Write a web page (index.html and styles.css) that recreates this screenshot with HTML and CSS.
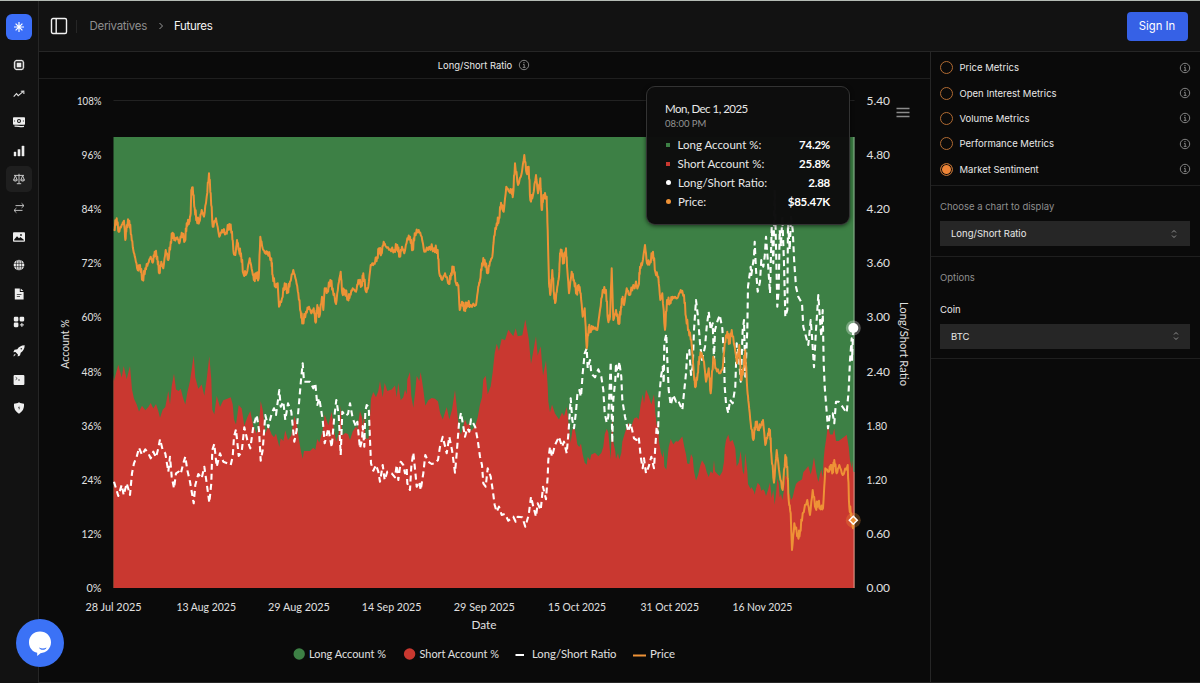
FILE: index.html
```html
<!DOCTYPE html>
<html lang="en">
<head>
  <meta charset="UTF-8" />
  <meta name="viewport" content="width=device-width, initial-scale=1" />
  <title>Futures - Long/Short Ratio</title>
  <link rel="stylesheet" href="styles.css">
</head>
<body>
  <svg width="0" height="0" class="defs">
    <symbol id="i-info" viewBox="0 0 12 12">
      <circle cx="6" cy="6" r="4.7" fill="none" stroke="currentColor" stroke-width=".8"/>
      <path d="M5 5.4h1.2v2.9M4.8 8.4h2.7" fill="none" stroke="currentColor" stroke-width=".8"/>
      <circle cx="6" cy="3.6" r=".6" fill="currentColor"/>
    </symbol>
    <symbol id="i-updown" viewBox="0 0 8 10">
      <path d="M2 3.5 4 1.5l2 2M2 6.5l2 2 2-2" fill="none" stroke="currentColor" stroke-width=".9"/>
    </symbol>
  </svg>

  <div class="app">
    <nav class="sidebar">
      <div class="logo">
        <svg width="12" height="12" viewBox="0 0 12 12"><path d="M6 1v10M1 6h10M2.6 2.6l6.8 6.8M9.4 2.6 2.6 9.4" stroke="#fff" stroke-width="1.2"/></svg>
      </div>
      <a class="nav-item"><svg viewBox="0 0 12 12"><rect x="1.7" y="1.7" width="8.6" height="8.6" rx="1.6" fill="none" stroke="#e8e8e8" stroke-width="1.3"/><rect x="3.7" y="3.7" width="4.6" height="4.6" fill="#e8e8e8"/><path d="M4 .6v1M6 .6v1M8 .6v1M4 10.4v1M6 10.4v1M8 10.4v1M.6 4h1M.6 6h1M.6 8h1M10.4 4h1M10.4 6h1M10.4 8h1" stroke="#e8e8e8" stroke-width=".9"/></svg></a>
      <a class="nav-item"><svg viewBox="0 0 12 12"><path d="M.7 8.7 3.5 5.7l1.7 2L9.8 3.9M7.8 3.2l3-.1.1 3" fill="none" stroke="#e0e0e0" stroke-width="1.1"/></svg></a>
      <a class="nav-item"><svg viewBox="0 0 12 12"><rect x="0" y="1.2" width="12" height="7.6" rx=".8" fill="#eee"/><circle cx="6" cy="5" r="2" fill="#121212"/><circle cx="6" cy="5" r="1" fill="#eee"/><path d="M1.6 4.2v1.6M10.4 4.2v1.6" stroke="#555" stroke-width=".8"/><path d="M1.5 10.2c3-.6 5.5.8 9.5.2" stroke="#eee" stroke-width="1.2" fill="none"/></svg></a>
      <a class="nav-item"><svg viewBox="0 0 12 12"><path d="M1 7h2v4H1zM4.900 4.500h2.200V11H4.900zM8.900 1h2.200v10H8.900z" fill="#eee" stroke="#eee" stroke-width=".4"/></svg></a>
      <a class="nav-item active"><svg viewBox="0 0 12 12"><path d="M6 .8v9.700M1 2.400h10M3.800 10.700h4.400M.6 7 2.400 2.800 4.200 7M7.800 7l1.800-4.200L11.400 7M.5 7c.5 1.500 3.300 1.500 3.800 0zM7.700 7c.5 1.500 3.300 1.500 3.800 0z" fill="none" stroke="#cfcfcf" stroke-width=".95"/></svg></a>
      <a class="nav-item"><svg viewBox="0 0 12 12"><path d="M2.500 3.600h8.300M8.600 1.300 11 3.600 8.600 5.900M9.500 8.400H1.200M3.400 6.100 1 8.400l2.400 2.300" fill="none" stroke="#cfcfcf" stroke-width=".9"/></svg></a>
      <a class="nav-item"><svg viewBox="0 0 12 12"><rect y="1.300" width="12" height="9.400" rx=".9" fill="#eee"/><path d="M1.200 8.500 4 5.200l2 2 1.300-1.100 3.500 2.600v.8H1.200z" fill="#121212"/><circle cx="8" cy="4" r=".9" fill="#121212"/></svg></a>
      <a class="nav-item"><svg viewBox="0 0 12 12"><circle cx="6" cy="6" r="5.300" fill="#eee"/><path d="M.5 4.300h11M.5 7.700h11M6 .5v11M4.200.8c-1.200 3.500-1.200 7 0 10.400M7.800.8c1.200 3.500 1.200 7 0 10.400" fill="none" stroke="#222" stroke-width=".7"/></svg></a>
      <a class="nav-item"><svg viewBox="0 0 12 12"><path d="M1.800.4h5v3.500h3.800v7.700H1.800z" fill="#eee"/><path d="M7.700.6 10.400 3H7.700z" fill="#eee"/><path d="M3.800 6.500h4.700M3.800 8.500H7" stroke="#333" stroke-width=".8"/></svg></a>
      <a class="nav-item"><svg viewBox="0 0 12 12"><rect x=".8" y=".8" width="4.600" height="4.600" rx="1.100" fill="#eee"/><rect x="6.600" y=".8" width="4.600" height="4.600" rx="1.100" fill="#eee"/><rect x=".8" y="6.600" width="4.600" height="4.600" rx="1.100" fill="#eee"/><path d="M8.900 6.900v4M6.900 8.900h4" stroke="#eee" stroke-width="1"/></svg></a>
      <a class="nav-item"><svg viewBox="0 0 12 12"><path d="M11.700.3C8 .3 5.900 2 4.300 4.200L1.500 4.800.3 7.200l2.200-.2 2.400 2.500-.2 2.100 2.300-1.200.7-2.700C10 6.200 11.700 4 11.700.3z" fill="#eee"/><path d="M.5 11.400c0-1.700.7-2.700 1.900-2.700.5.900-.3 2.500-1.900 2.700z" fill="#bbb"/><circle cx="8.300" cy="3.700" r=".8" fill="#333"/></svg></a>
      <a class="nav-item"><svg viewBox="0 0 12 12"><rect x=".6" y=".9" width="10.800" height="10.200" rx="1" fill="#eee"/><path d="M2.600 3.200 4.200 4.500 2.600 5.800M5 6h2" stroke="#333" stroke-width=".8" fill="none"/></svg></a>
      <a class="nav-item"><svg viewBox="0 0 12 12"><path d="M6 .3c1.600 1 3.200 1.400 5 1.500.3 4.700-1.200 7.700-5 9.900C2.200 9.500.7 6.500 1 1.800 2.800 1.700 4.400 1.300 6 .3z" fill="#eee"/><path d="M6.500 3.400 4.900 6.200h1.300l-.5 2.200 1.500-2.900H6z" fill="#333"/></svg></a>
    </nav>

    <div class="page">
      <header class="topbar">
        <svg class="panel-icon" viewBox="0 0 18 18"><rect x="1.500" y="1.500" width="15" height="15" rx="1.500" fill="none" stroke="#f2f2f2" stroke-width="1.400"/><path d="M6.200 1.500v15" stroke="#f2f2f2" stroke-width="1.400"/></svg>
        <span class="divider"></span>
        <span class="crumb">Derivatives</span>
        <svg class="chevron" viewBox="0 0 6 8"><path d="M1.500 1 4.500 4l-3 3" fill="none" stroke="#9a9a9a" stroke-width="1"/></svg>
        <span class="crumb current">Futures</span>
        <button class="sign-in">Sign In</button>
      </header>

      <div class="content">
        <main class="chart-panel">
          <div class="chart-title">Long/Short Ratio <svg class="info"><use href="#i-info"/></svg></div>
          <div class="chart-area">
            <svg id="chart" class="chart" viewBox="39 79 891 603">
              <g id="grid"></g>
              <rect x="113.500" y="137" width="741" height="451" fill="#3d8045"/>
              <path id="short-area" fill="#c93830"/>
              <path d="M854 137v451" stroke="#fff" stroke-opacity=".35" stroke-width="1.200"/>
              <path id="ratio-line" class="line ratio"/>
              <path id="price-line" class="line price"/>
              <circle cx="853.300" cy="328" r="7.500" fill="#fff" fill-opacity=".3"/>
              <circle cx="853.300" cy="328" r="5" fill="#fff"/>
              <circle cx="853.300" cy="520.300" r="7.500" fill="#ee9236" fill-opacity=".3"/>
              <path d="M853.300 516.300l4 4-4 4-4-4z" fill="#ee9236" stroke="#fff" stroke-width="1.500"/>
              <g id="labels"></g>
              <path d="M896.500 108.500h13M896.500 112.500h13M896.500 116.500h13" stroke="#8b8b8b" stroke-width="1.700"/>
              <circle cx="299.200" cy="654" r="5.700" fill="#3d8045"/>
              <circle cx="409.600" cy="654" r="5.700" fill="#c93830"/>
              <path d="M515.500 655h8.500" stroke="#fff" stroke-width="2"/>
              <path d="M633 655.500h13" stroke="#ee9236" stroke-width="2"/>
            </svg>
            <div class="tooltip">
              <div class="tip-date">Mon, Dec 1, 2025</div>
              <div class="tip-time">08:00 PM</div>
              <div class="tip-row"><i class="mark green"></i><span>Long Account %:</span><b>74.2%</b></div>
              <div class="tip-row"><i class="mark red"></i><span>Short Account %:</span><b>25.8%</b></div>
              <div class="tip-row"><i class="mark round white"></i><span>Long/Short Ratio:</span><b>2.88</b></div>
              <div class="tip-row"><i class="mark round orange"></i><span>Price:</span><b>$85.47K</b></div>
            </div>
          </div>
        </main>

        <aside class="options">
          <div class="metrics">
            <label class="metric"><i class="radio"></i>Price Metrics<svg class="info"><use href="#i-info"/></svg></label>
            <label class="metric"><i class="radio"></i>Open Interest Metrics<svg class="info"><use href="#i-info"/></svg></label>
            <label class="metric"><i class="radio"></i>Volume Metrics<svg class="info"><use href="#i-info"/></svg></label>
            <label class="metric"><i class="radio"></i>Performance Metrics<svg class="info"><use href="#i-info"/></svg></label>
            <label class="metric"><i class="radio checked"></i>Market Sentiment<svg class="info"><use href="#i-info"/></svg></label>
          </div>
          <div class="group choose">
            <p class="hint">Choose a chart to display</p>
            <div class="select">Long/Short Ratio<svg class="updown"><use href="#i-updown"/></svg></div>
          </div>
          <div class="group coin">
            <p class="hint">Options</p>
            <p class="field">Coin</p>
            <div class="select wide">BTC<svg class="updown"><use href="#i-updown"/></svg></div>
          </div>
        </aside>
      </div>
    </div>
  </div>

  <div class="chat">
    <svg width="26" height="26" viewBox="0 0 26 26"><path d="M13 1.500c6.300 0 11 4.700 11 10.800 0 6-4.700 10.700-10.500 10.900L10.200 26v-3.200C5.300 21.800 2 17.600 2 12.300 2 6.200 6.700 1.500 13 1.500z" fill="#fff"/><path d="M12 17.500c2.500 1.300 5 1.300 7.500 0-.5 3-6.500 3.300-7.500 0z" fill="#3b72f6"/></svg>
  </div>

  <script src="chart.js"></script>
</body>
</html>
```

FILE: chart.js
```js
// Series are stored in thirds of a pixel from the block's origin: [originX, originY, "x,y x,y ..."]
const ratioBlocks = [
  [110, 340, "12,425 25,468 35,435 41,465 50,430 60,465 66,400 72,370 80,350 87,323 96,345 106,328 115,340 122,355 130,335 138,352 145,325 150,298 158,330 166,340 175,395 180,350 185,410 192,445 198,400 206,395 212,402 220,370 226,350 232,390 240,425 251,490 256,435 265,402 275,415 283,380 290,430 298,488 304,430 307,330 313,312 320,380 330,340 340,365 352,370 362,375 368,350 372,290 378,268 386,348 395,335 403,262 412,300 421,325 430,260 440,225 447,270 452,362 458,330 466,225 475,262 485,220 492,205 498,225 508,150 512,200 520,185 526,240 534,190 544,215 553,305 560,270 566,200 573,120 578,70 582,125 600,125 610,145 616,130 622,195 628,175 638,240 644,310 655,265 665,322 672,240 679,180 686,225 692,345 697,215 706,228 714,222"],
  [350, 340, "0,190 8,235 18,260 22,245 30,325 36,300 38,258 43,320 46,215 50,195 56,200 60,300 63,370 70,392 78,375 85,395 90,425 98,375 104,420 112,395 125,400 135,412 140,375 145,420 152,365 160,375 165,400 170,385 172,430 180,450 184,380 190,338 196,395 200,440 208,425 212,450 220,400 226,345 235,365 245,372 255,370 264,360 270,320 278,290 283,310 290,340 298,290 306,330 315,398 320,340 327,250 333,218 340,260 345,290 352,265 358,275 363,238 370,250 376,262 383,300 390,350 396,375 400,430 407,440 413,385 422,410 428,450 434,495 440,515 447,500 455,525 465,522 475,542 490,530 497,545 503,530 517,532 526,560 536,525 543,470 550,500 558,530 563,490 572,510 579,440 588,478 593,410 595,360 600,320 606,350 615,315 627,290 636,320 642,305 650,340 656,270 662,175 667,240 672,265 678,215 682,165 688,150 693,170 698,100 704,40 710,25 713,85"],
  [590, 340, "0,60 4,100 8,105 15,112 25,88 34,110 40,150 44,220 50,248 55,230 60,120 62,65 67,308 70,180 76,120 78,70 84,110 88,65 94,110 97,180 105,230 115,275 122,250 132,295 140,300 146,290 152,350 158,385 162,355 168,400 176,380 184,350 192,385 196,320 200,260 204,280 207,180 213,110 218,80 221,130 223,10 229,-18 232,60 236,150 242,195 250,165 258,185 264,180 277,210 283,150 288,100 292,35 298,30 303,105 308,80"],
  [590, 130, "312,600 318,510 324,560 330,640 336,690 345,650 350,590 356,545 362,600 368,580 372,690 375,600 382,575 389,555 397,595 402,680 404,770 408,820 415,850 420,810 428,820 436,770 440,640 446,670 452,755 458,600 462,570 466,740 472,600 474,470 482,410 484,435 492,380 494,335 498,420 503,485 510,455 514,390 520,410 524,380 528,320 534,400 540,490 545,290 550,400 554,180 558,350 562,530 566,480 569,300 573,350 577,260 582,400 586,560 592,540 594,280 599,360 603,260 608,300 613,400 618,470 625,500 636,520 640,590 648,620 655,645 662,570 666,620 672,712 678,600 685,495 690,570 694,620 698,540 701,700 704,770 708,820 714,895 720,850 728,850 733,880 738,815 746,815 754,825 764,840 770,848 776,780 780,690 785,625 786,690 790,595"]
];

const priceBlocks = [
  [110, 130, "12,298 20,265 26,305 35,285 42,272 46,330 50,285 58,272 64,315 70,360 76,385 83,420 90,405 98,450 106,415 114,400 122,380 128,398 134,365 142,380 148,430 154,395 160,415 167,360 175,390 182,335 188,308 194,330 202,322 208,340 215,308 225,332 230,280 238,275 242,250 244,180 248,172 254,235 260,268 268,275 275,240 282,260 290,200 297,130 302,190 308,290 318,265 328,320 336,300 348,308 358,282 366,305 371,370 376,375 381,330 387,360 393,370 400,430 410,430 419,385 427,425 433,450 438,430 446,445 451,320 458,355 466,370 472,365 484,385 488,435 496,470 503,460 507,530 516,505 524,460 533,485 540,455 550,420 558,450 565,490 572,545 578,578 588,545 597,530 604,550 611,535 617,578 622,525 628,560 636,500 640,540 644,475 652,485 661,450 668,475 678,522 685,465 692,425 697,490 704,480 714,505"],
  [350, 130, "0,495 8,475 18,485 25,450 35,465 40,430 48,485 55,470 62,405 72,400 82,380 87,355 94,372 101,335 108,350 120,358 133,360 142,345 149,380 156,350 163,370 172,325 180,320 188,360 194,310 206,300 215,320 223,365 238,350 252,355 263,360 268,430 276,450 285,430 297,462 303,430 311,410 318,460 325,465 329,540 336,515 344,538 350,518 362,525 378,525 385,470 390,450 396,400 404,390 413,430 420,395 427,380 432,320 440,280 447,265 453,218 461,245 469,170 478,185 485,180 489,195 495,100 504,165 515,130 523,75 530,130 536,110 541,210 549,195 558,135 564,190 571,145 575,240 580,195 590,200 593,300 597,460 601,495 607,420 612,490 616,518 622,470 627,440 630,370 635,360 640,400 648,355 652,420 657,490 665,425 672,450 680,490 686,465 692,490 698,560 704,535 710,655 716,590"],
  [590, 130, "0,600 10,590 22,600 30,540 38,480 48,480 54,570 60,560 65,415 70,570 78,540 87,582 93,530 98,500 102,525 110,475 118,495 130,465 146,465 150,410 157,400 165,345 171,400 180,395 189,365 196,425 205,440 211,510 217,490 225,600 231,510 240,515 248,500 262,505 272,480 282,495 288,560 296,600 304,630 308,680 312,740 316,772 323,730 328,680 335,670 342,695 348,755 356,715 362,790 370,680 378,715 390,730 398,715 404,640 412,605 418,640 425,600 434,650 441,700 448,645 453,750 460,715 466,660 472,780 476,820 482,880 490,930 497,875 505,895 513,885 519,870 526,945 534,910 540,900 544,970 552,1058 560,960 569,1035 578,1080 586,975 592,1010 596,1110 602,1150 606,1260 613,1180 624,1220 630,1205 638,1150 652,1110 660,1155 668,1080 677,1135 684,1115 690,1130 699,1135 706,1015 716,1025 722,1005 728,1025 733,990 740,1030 748,1005 758,1035 773,1005 778,1130 784,1150 789,1195 790,1170"]
];

const BASE = 588;          // y of zero on both axes
const RATIO_PX = 90.19;    // px per 1.00 of ratio
const PCT_PX = 4.509;      // px per 1%

function points(blocks) {
  const out = [];
  blocks.forEach(([ox, oy, data]) => {
    data.split(" ").forEach(p => {
      const [x, y] = p.split(",").map(Number);
      out.push([ox + x / 3, oy + y / 3]);
    });
  });
  return out;
}

function roughen(pts, amount) {
  const out = [pts[0]];
  for (let i = 1; i < pts.length; i++) {
    const [x0, y0] = pts[i - 1];
    const [x1, y1] = pts[i];
    for (let k = 1; k < 4; k++) {
      const size = amount * (0.55 + 0.45 * Math.sin(i * 7.3 + k * 31.7));
      const n = k % 2 ? size : -size;
      out.push([x0 + (x1 - x0) * k / 4, y0 + (y1 - y0) * k / 4 + n]);
    }
    out.push([x1, y1]);
  }
  return out;
}

function toPath(pts) {
  return "M" + pts.map(p => p[0].toFixed(1) + " " + p[1].toFixed(1)).join("L");
}

const ratio = points(ratioBlocks);
const price = roughen(points(priceBlocks), 3.6);
const shortPct = ratio.map(([x, y]) => {
  const r = (BASE - y) / RATIO_PX;
  return [x, BASE - 100 / (1 + r) * PCT_PX];
});

document.getElementById("ratio-line").setAttribute("d", toPath(ratio));
document.getElementById("price-line").setAttribute("d", toPath(price));
document.getElementById("short-area").setAttribute("d", toPath(shortPct) + "L854.5 472V588H113.5V375Z");

const labels = document.getElementById("labels");

function addText(text, x, y, anchor, width, extra) {
  const t = document.createElementNS("http://www.w3.org/2000/svg", "text");
  t.textContent = text;
  t.setAttribute("x", x);
  t.setAttribute("y", y);
  t.setAttribute("text-anchor", anchor);
  t.setAttribute("textLength", width);
  t.setAttribute("lengthAdjust", "spacingAndGlyphs");
  if (extra) t.setAttribute("transform", extra);
  labels.appendChild(t);
}

for (let i = 0; i <= 9; i++) {
  const y = BASE - i * 54.11;
  const pct = i * 12 + "%";
  addText(pct, 101.5, y + 4, "end", pct.length === 2 ? 15 : pct.length === 3 ? 20 : 24.5);
  addText((i * 0.6).toFixed(2), 866.5, y + 4, "start", i === 2 || i === 3 ? 20.5 : 23.5);
}
document.getElementById("grid").innerHTML = '<path d="M113.5 100.500h741" stroke="#222"/>';

["28 Jul 2025", "13 Aug 2025", "29 Aug 2025", "14 Sep 2025", "29 Sep 2025", "15 Oct 2025", "31 Oct 2025", "16 Nov 2025"]
  .forEach((d, i) => addText(d, 113.5 + i * 92.7, 611, "middle", [56, 59.5, 62, 59.5, 61, 58, 58.5, 60][i]));

addText("Date", 484, 629, "middle", 25);
addText("Account %", 0, 0, "middle", 49.5, "translate(69 344) rotate(-90)");
addText("Long/Short Ratio", 0, 0, "middle", 84, "translate(899.5 344) rotate(90)");
addText("Long Account %", 309, 658, "start", 77);
addText("Short Account %", 419.5, 658, "start", 79.5);
addText("Long/Short Ratio", 532, 658, "start", 84.5);
addText("Price", 650, 658, "start", 25);
```

FILE: styles.css
```css
* {
  box-sizing: border-box;
}
body {
  margin: 0;
  height: 683px;
  background: #0a0a0a;
  color: #e8e8e8;
  font-family: Inter, "Liberation Sans", sans-serif;
  font-size: 10px;
  overflow: hidden;
}
.defs {
  position: absolute;
}
.app {
  display: flex;
  height: 683px;
  border-top: 1px solid #b4bbb4;
}
.sidebar {
  width: 39px;
  background: #121212;
  border-right: 1px solid #262626;
  display: flex;
  flex-direction: column;
  align-items: center;
  padding-top: 13px;
}
.logo {
  width: 26px;
  height: 26px;
  border-radius: 6px;
  background: #3b6ef8;
  display: flex;
  align-items: center;
  justify-content: center;
  margin-bottom: 12px;
}
.nav-item {
  width: 26px;
  height: 26px;
  border-radius: 5px;
  display: flex;
  align-items: center;
  justify-content: center;
  margin-bottom: 2.6px;
}
.nav-item.active {
  background: #1f1f1f;
}
.nav-item svg {
  width: 12px;
  height: 12px;
}
.page {
  flex: 1;
  display: flex;
  flex-direction: column;
}
.topbar {
  height: 51px;
  background: #121212;
  border-bottom: 1px solid #262626;
  display: flex;
  align-items: center;
  padding: 0 12.5px 0 11px;
}
.panel-icon {
  width: 18px;
  height: 18px;
}
.divider {
  width: 1px;
  height: 13px;
  background: #262626;
  margin: 0 12.5px 0 8px;
}
.crumb {
  font-size: 11.5px;
  letter-spacing: -0.3px;
  color: #8f8f8f;
}
.chevron {
  width: 6px;
  height: 8px;
  margin: 0 10px 0 11px;
}
.crumb.current {
  color: #f5f5f5;
}
.sign-in {
  margin-left: auto;
  width: 61px;
  height: 29px;
  border: none;
  border-radius: 4px;
  background: #3661e6;
  color: #fff;
  font: 400 11.3px Inter, sans-serif;
  padding: 0;
}
.content {
  flex: 1;
  display: flex;
  border-bottom: 1px solid #262626;
}
.chart-panel {
  width: 891px;
}
.chart-title {
  height: 27px;
  border-bottom: 1px solid #1f1f1f;
  display: flex;
  align-items: center;
  justify-content: center;
  gap: 6px;
  font-size: 9.4px;
  padding-right: 1px;
}
.info {
  width: 12px;
  height: 12px;
  color: #a0a0a0;
}
.chart-area {
  position: relative;
}
.chart {
  display: block;
  width: 891px;
  height: 603px;
}
.chart text {
  font-family: Lato, sans-serif;
  font-size: 11.5px;
  fill: #e0e0e0;
}
.line {
  fill: none;
  stroke-width: 2;
  stroke-linejoin: round;
}
.ratio {
  stroke: #fff;
  stroke-width: 2.1;
  stroke-dasharray: 6 4;
}
.price {
  stroke: #ee9236;
}
.tooltip {
  position: absolute;
  left: 607px;
  top: 7px;
  width: 204px;
  height: 139px;
  padding: 14px 19px 0 18px;
  background: rgba(13, 13, 13, 0.985);
  border: 1px solid #333;
  border-radius: 9px;
  box-shadow: 0 1px 4px rgba(0, 0, 0, 0.6);
  font-family: Lato, sans-serif;
}
.tip-date {
  font-size: 11.5px;
  letter-spacing: -0.5px;
  line-height: 16px;
  letter-spacing: -0.52px;
}
.tip-time {
  font-size: 9.5px;
  line-height: 14px;
  color: #949494;
  margin-bottom: 4px;
}
.tip-row {
  display: flex;
  align-items: center;
  height: 19px;
  font-size: 11.5px;
}
.tip-row b {
  margin-left: auto;
  letter-spacing: -0.25px;
  color: #fff;
}
.mark {
  width: 4px;
  height: 4px;
  margin: 0 7.5px 0 1px;
}
.mark.round {
  width: 5px;
  height: 5px;
  margin-right: 7px;
  border-radius: 50%;
}
.green { background: #3d8045; }
.red { background: #c93830; }
.white { background: #fff; }
.orange { background: #ee9236; }

.options {
  flex: 1;
  border-left: 1px solid #262626;
}
.metrics {
  height: 134px;
  padding: 3px 9px 0;
  border-bottom: 1px solid #1f1f1f;
}
.metric {
  display: flex;
  align-items: center;
  height: 25.4px;
  font-size: 9.5px;
}
.metric .info {
  margin-left: auto;
}
.radio {
  width: 13px;
  height: 13px;
  border: 1px solid #b06a32;
  border-radius: 50%;
  margin-right: 6.5px;
}
.radio.checked {
  background: #ee8436;
  box-shadow: inset 0 0 0 1px #0a0a0a;
}
.group {
  padding: 14px 10px 0 9px;
  border-bottom: 1px solid #1f1f1f;
}
.choose {
  height: 71px;
}
.coin {
  height: 102px;
}
.hint, .field {
  margin: 0;
  line-height: 13px;
  font-size: 9.5px;
}
.hint {
  color: #8f8f8f;
}
.field {
  margin-top: 18.5px;
}
.select {
  margin-top: 8px;
  height: 25px;
  background: #262626;
  display: flex;
  align-items: center;
  padding: 0 12px 0 11px;
  font-size: 9.5px;
}
.select.wide {
  padding-right: 10px;
}
.updown {
  width: 8px;
  height: 10px;
  margin-left: auto;
  color: #9a9a9a;
}
.chat {
  position: absolute;
  left: 16px;
  top: 619px;
  width: 48px;
  height: 48px;
  border-radius: 50%;
  background: #3b72f6;
  display: flex;
  align-items: center;
  justify-content: center;
}
```
